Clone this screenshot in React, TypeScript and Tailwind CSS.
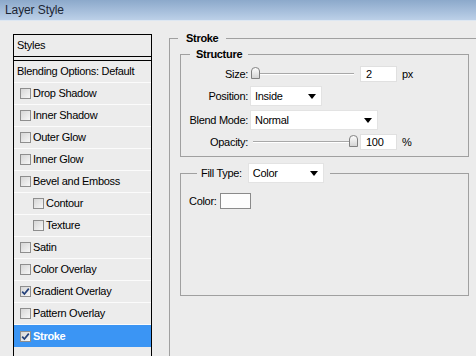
import React from 'react';

const font = "font-['Liberation_Sans',Arial,sans-serif]";

const styleRows = [
  { label: 'Drop Shadow', checked: false, indent: false },
  { label: 'Inner Shadow', checked: false, indent: false },
  { label: 'Outer Glow', checked: false, indent: false },
  { label: 'Inner Glow', checked: false, indent: false },
  { label: 'Bevel and Emboss', checked: false, indent: false },
  { label: 'Contour', checked: false, indent: true },
  { label: 'Texture', checked: false, indent: true },
  { label: 'Satin', checked: false, indent: false },
  { label: 'Color Overlay', checked: false, indent: false },
  { label: 'Gradient Overlay', checked: true, indent: false },
  { label: 'Pattern Overlay', checked: false, indent: false },
];

const CheckBox = ({ checked }: { checked: boolean }) => (
  <span className="w-[11px] h-[11px] shrink-0 border border-[#8e8e8e] bg-gradient-to-br from-[#d6d6d6] to-[#f7f7f7] flex items-center justify-center">
    {checked && (
      <svg width="9" height="9" viewBox="0 0 9 9">
        <path d="M1.2 4.6 L3.4 7 L7.8 1.6" fill="none" stroke="#23407a" strokeWidth="1.7" />
      </svg>
    )}
  </span>
);

const Arrow = () => (
  <svg width="8" height="5" viewBox="0 0 8 5">
    <path d="M0 0 H8 L4 5 Z" fill="#000" />
  </svg>
);

const Dropdown = ({ value, width }: { value: string; width: string }) => (
  <div className={`${width} h-[20px] bg-white border border-[#e3e3e3] flex items-center justify-between pl-[4px] pr-[5px]`}>
    <span>{value}</span>
    <Arrow />
  </div>
);

const Slider = ({ pos }: { pos: 'start' | 'end' }) => (
  <div className="relative w-[104px] h-[16px] flex items-center">
    <div className="w-full ml-[3px] h-[2px] border-t border-[#a8a8a8] border-b border-b-white" />
    <svg
      width="9"
      height="12"
      viewBox="0 0 9 12"
      className={`absolute top-[1px] ${pos === 'start' ? 'left-[1px]' : 'right-[-4px]'}`}
    >
      <defs>
        <linearGradient id={`g-${pos}`} x1="0" y1="0" x2="0" y2="1">
          <stop offset="0" stopColor="#ffffff" />
          <stop offset="1" stopColor="#d2d2d2" />
        </linearGradient>
      </defs>
      <path d="M0.5 11.5 V4 Q0.5 0.5 4.5 0.5 Q8.5 0.5 8.5 4 V11.5 Z" fill={`url(#g-${pos})`} stroke="#808080" />
    </svg>
  </div>
);

const NumBox = ({ value }: { value: string }) => (
  <div className="w-[37px] h-[16px] bg-white border border-[#e0e0e0] flex items-center pl-[5px]">{value}</div>
);

const Label = ({ children }: { children: React.ReactNode }) => (
  <span className="w-[67px] text-right shrink-0">{children}</span>
);

export default function App() {
  return (
    <div className={`w-[476px] h-[356px] overflow-hidden bg-[#ececec] flex flex-col text-[11px] tracking-[-0.3px] text-black ${font}`}>
      {/* title bar */}
      <div className="h-[21px] shrink-0 bg-gradient-to-b from-[#8ca9cb] to-[#bcd0e8] border-b border-[#dde7f2] flex items-center pl-[5px]">
        <span className="text-[12px] tracking-[-0.1px] text-[#1c2634]">Layer Style</span>
      </div>

      <div className="flex-1 flex items-stretch overflow-hidden">
        {/* styles list */}
        <div className="ml-[13px] mt-[13px] w-[139px] shrink-0 border-x border-t border-black flex flex-col">
          <div className="h-[22px] border-b border-black flex items-center pl-[3px]">Styles</div>
          <div className="h-[3px]" />
          <div className="border-t border-black flex flex-col">
            <div className="h-[22px] border-b border-[#fbfbfb] flex items-center pl-[3px]">Blending Options: Default</div>
            {styleRows.map((r) => (
              <div
                key={r.label}
                className={`h-[22px] border-b border-[#fbfbfb] flex items-center gap-[2px] ${r.indent ? 'pl-[19px]' : 'pl-[6px]'}`}
              >
                <CheckBox checked={r.checked} />
                <span>{r.label}</span>
              </div>
            ))}
            <div className="h-[22px] bg-[#3b95f4] flex items-center gap-[2px] pl-[6px] text-white font-bold">
              <CheckBox checked />
              <span>Stroke</span>
            </div>
          </div>
        </div>

        {/* stroke settings */}
        <fieldset className="ml-[17px] mt-[11px] w-[320px] h-[340px] shrink-0 border border-[#a0a0a0] pl-[10px] pt-[3px]">
          <legend className="ml-[-2px] px-[8px] font-bold leading-[13px]">Stroke</legend>

          <fieldset className="w-[289px] border border-[#a0a0a0] pt-[5px] pb-[6px] flex flex-col gap-[4px]">
            <legend className="ml-[9px] px-[6px] font-bold leading-[13px]">Structure</legend>
            <div className="flex items-center gap-[2px] h-[16px]">
              <Label>Size:</Label>
              <Slider pos="start" />
              <div className="ml-[4px]">
                <NumBox value="2" />
              </div>
              <span className="ml-[3px]">px</span>
            </div>
            <div className="flex items-center gap-[2px]">
              <Label>Position:</Label>
              <Dropdown value="Inside" width="w-[72px]" />
            </div>
            <div className="flex items-center gap-[2px]">
              <Label>Blend Mode:</Label>
              <Dropdown value="Normal" width="w-[128px]" />
            </div>
            <div className="flex items-center gap-[2px] h-[16px]">
              <Label>Opacity:</Label>
              <Slider pos="end" />
              <div className="ml-[4px]">
                <NumBox value="100" />
              </div>
              <span className="ml-[3px]">%</span>
            </div>
          </fieldset>

          <fieldset className="mt-[6px] w-[289px] border border-[#a0a0a0] pl-[8px] pt-[10px] pb-[85px]">
            <legend className="ml-[8px] pl-[4px] pr-[6px]">
              <div className="flex items-center gap-[6px]">
                <span>Fill Type:</span>
                <Dropdown value="Color" width="w-[76px]" />
              </div>
            </legend>
            <div className="flex items-center gap-[3px]">
              <span>Color:</span>
              <div className="w-[31px] h-[16px] bg-[#fdfdfd] border border-[#8a8a8a]" />
            </div>
          </fieldset>
        </fieldset>
      </div>
    </div>
  );
}
